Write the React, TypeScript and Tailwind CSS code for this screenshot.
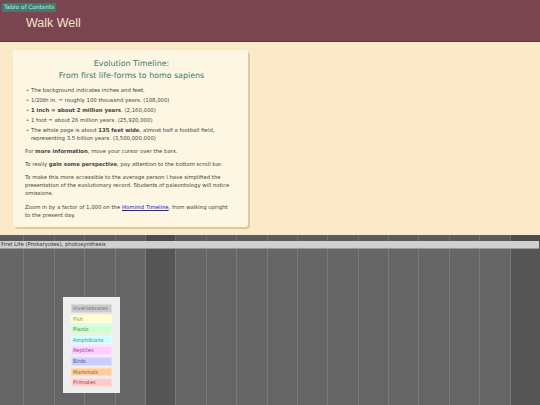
import React from "react";

const legend = [
  { name: "Invertebrates", bg: "bg-[#cccccc]", text: "text-[#777777]", border: "border-[#dadada]" },
  { name: "Fish", bg: "bg-[#ffffcc]", text: "text-[#888866]", border: "border-[#ffffdd]" },
  { name: "Plants", bg: "bg-[#ccffcc]", text: "text-[#558855]", border: "border-[#ddffdd]" },
  { name: "Amphibians", bg: "bg-[#ccffff]", text: "text-[#558888]", border: "border-[#ddffff]" },
  { name: "Reptiles", bg: "bg-[#ffccff]", text: "text-[#885588]", border: "border-[#ffddff]" },
  { name: "Birds", bg: "bg-[#ccccff]", text: "text-[#555588]", border: "border-[#ddddff]" },
  { name: "Mammals", bg: "bg-[#ffcc99]", text: "text-[#886644]", border: "border-[#ffddbb]" },
  { name: "Primates", bg: "bg-[#ffcccc]", text: "text-[#885555]", border: "border-[#ffdddd]" },
];

const bullets: React.ReactNode[] = [
  <>The background indicates inches and feet.</>,
  <>1/20th in. = roughly 100 thousand years. (108,000)</>,
  <><b>1 inch = about 2 million years</b>. (2,160,000)</>,
  <>1 foot = about 26 million years. (25,920,000)</>,
  <>The whole page is about <b>135 feet wide</b>, almost half a football field,<br />representing 3.5 billion years. (3,500,000,000)</>,
];

export default function App() {
  const cols = Array.from({ length: 19 }, (_, i) => i);
  return (
    <div className="w-[540px] h-[405px] overflow-hidden bg-[#fbe9c8] flex flex-col" style={{ fontFamily: '"DejaVu Sans", Verdana, sans-serif' }}>
      <header className="h-[42px] shrink-0 bg-[#7a4550] border-b border-[#5e3139] relative">
        <div className="absolute left-[2px] top-[3px] bg-[#3e7c6c] text-[#d6e2d8] text-[5.8px] leading-[9px] px-[2px]">Table of Contents</div>
        <h1 className="absolute left-[26px] top-[15px] text-[12.5px] leading-[16px] text-[#f3e3cc]" style={{ fontFamily: '"Liberation Sans", Arial, sans-serif' }}>Walk Well</h1>
      </header>
      <div className="h-[193px] shrink-0 pl-[13px] pt-[8px]">
        <div className="w-[235px] h-[177px] bg-[#fdf6e3] rounded-[3px] shadow-[2px_2px_0_#dccb9f] pl-[12px] pr-[10px] pt-[8px]">
          <h2 className="text-center text-[#3d7870] text-[7.9px] leading-[11.5px] mb-[5px]">Evolution Timeline:<br />From first life-forms to homo sapiens</h2>
          <ul className="text-[5.35px] leading-[8px] text-[#444444] flex flex-col gap-[2px]">
            {bullets.map((b, i) => (
              <li key={i} className="flex">
                <span className="w-[6px] shrink-0 pl-[1px] text-[5px]">•</span>
                <span>{b}</span>
              </li>
            ))}
          </ul>
          <div className="text-[5.35px] leading-[8px] text-[#444444]">
            <p className="mt-[5px]">For <b>more information</b>, move your cursor over the bars.</p>
            <p className="mt-[5px]">To really <b>gain some perspective</b>, pay attention to the bottom scroll bar.</p>
            <p className="mt-[5px]">To make this more accessible to the average person I have simplified the presentation of the evolutionary record. Students of paleontology will notice omissions.</p>
            <p className="mt-[6px]">Zoom in by a factor of 1,000 on the <a className="text-[#2222cc] underline">Hominid Timeline</a>, from walking upright<br />to the present day.</p>
          </div>
        </div>
      </div>
      <div className="relative flex-1 overflow-hidden">
        <div className="flex h-full ml-[-7px]">
          {cols.map((i) => (
            <div
              key={i}
              className={`w-[30.4px] shrink-0 h-full border-l border-[#7a7a7a] ${i === 5 || i === 17 ? "bg-[#555555]" : "bg-[#666666]"}`}
            />
          ))}
        </div>
        <div className="absolute left-0 right-0 top-0 h-[6px] bg-[#000000]/10" />
        <div className="absolute left-0 right-[1px] top-[6px] h-[8px] bg-[#d0d0d0] border-b border-[#9a9a9a] text-[5.4px] leading-[7px] text-[#333333] pl-[1px]">
          First Life (Prokaryotes), photosynthesis
        </div>
        <div className="absolute left-[63px] top-[62px] w-[57px] h-[96px] bg-[#eeeeee] px-[8px] pt-[7px] flex flex-col gap-[2px]">
          {legend.map((l) => (
            <div key={l.name} className={`h-[8.6px] border ${l.bg} ${l.text} ${l.border} text-[5.2px] leading-[7px] pl-[1px]`}>
              {l.name}
            </div>
          ))}
        </div>
      </div>
    </div>
  );
}
